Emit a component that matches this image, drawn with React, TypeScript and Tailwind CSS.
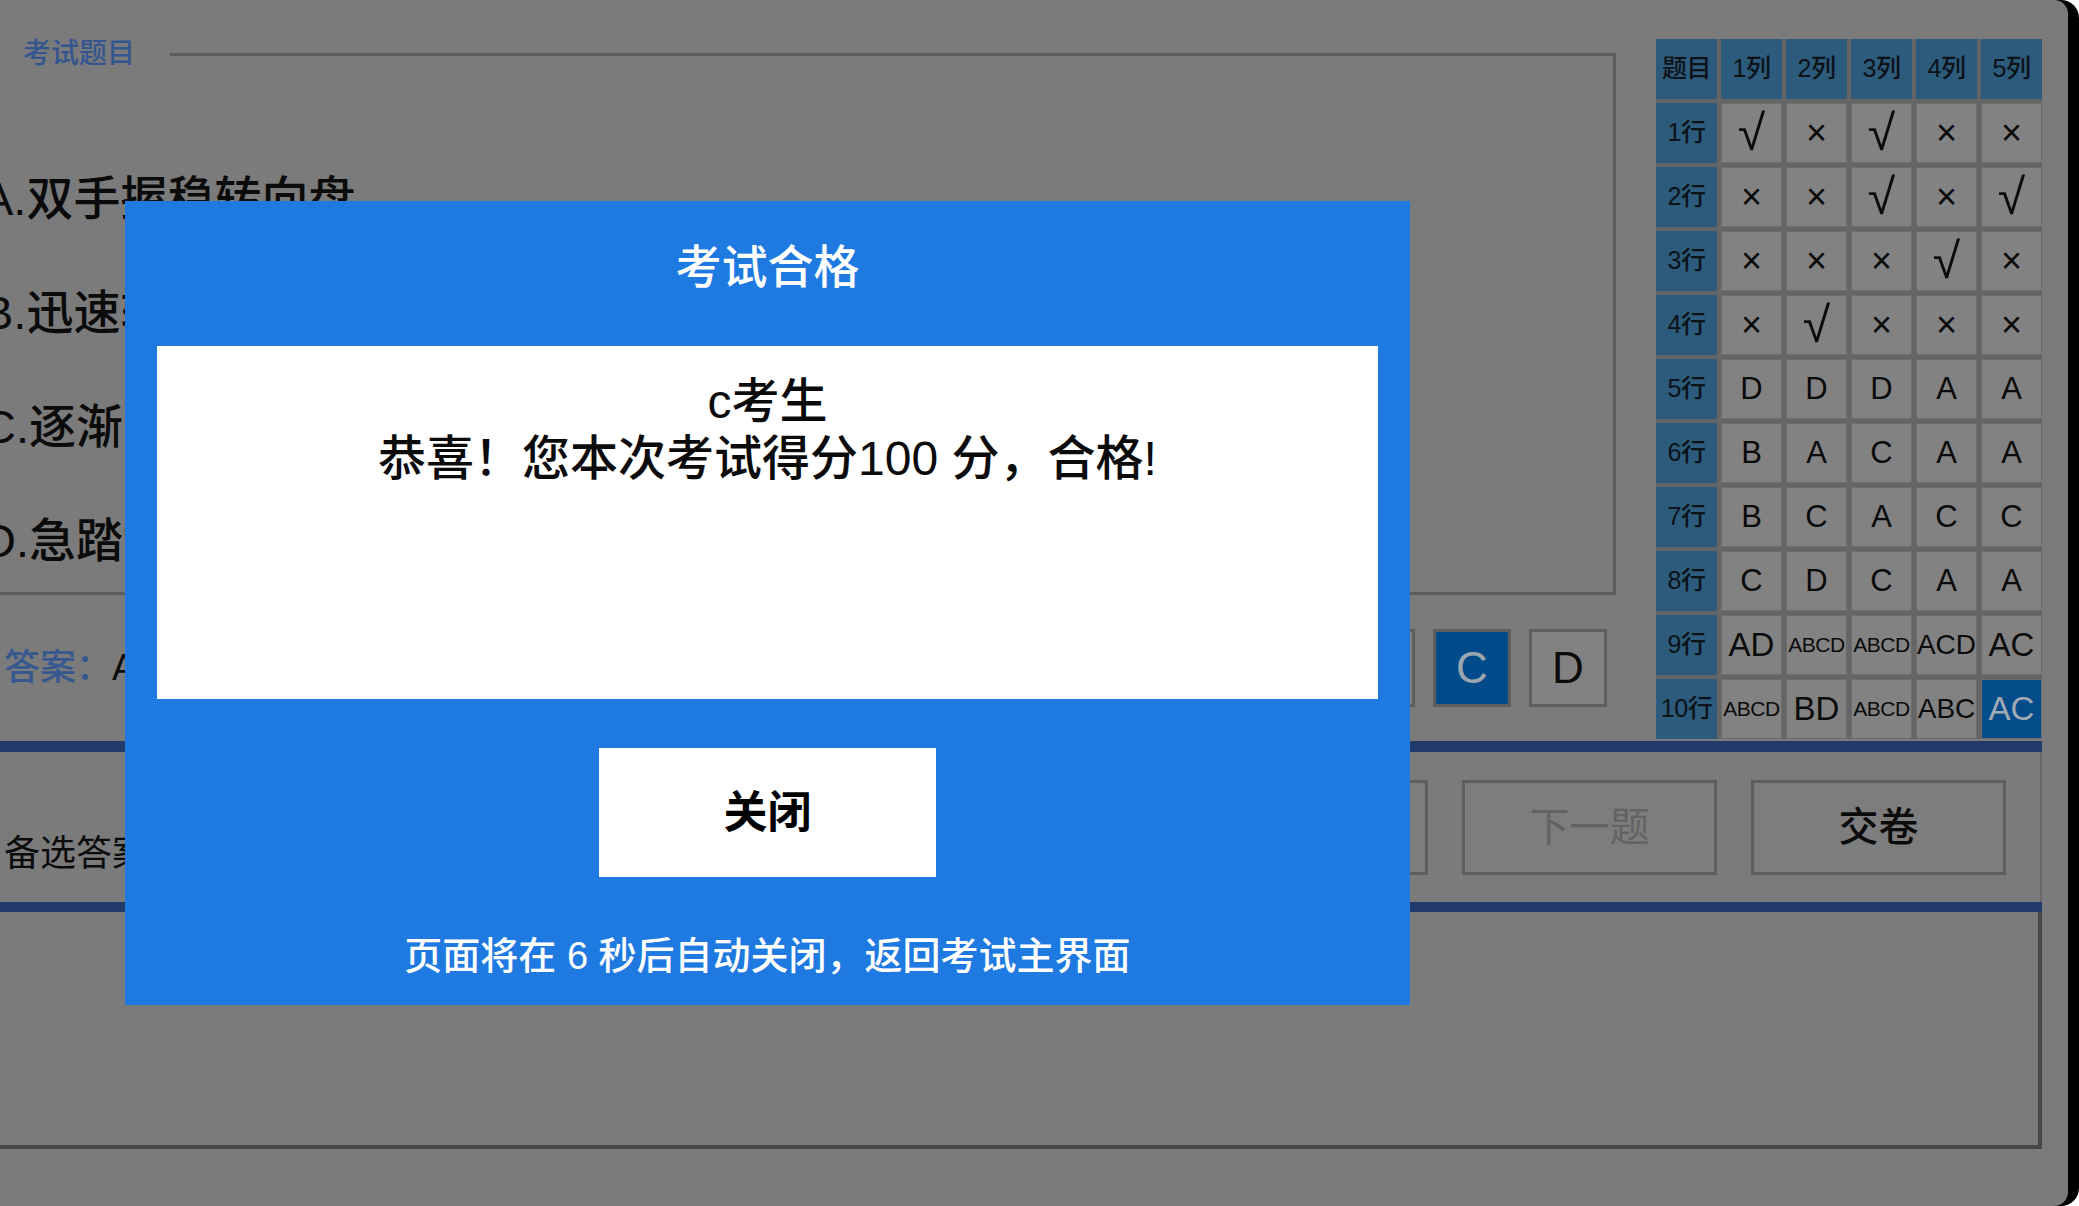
import React from 'react';

const FONT = "font-['Liberation_Sans','Noto_Sans_CJK_SC',sans-serif]";

const options = ['A.双手握稳转向盘', 'B.迅速转动转向盘', 'C.逐渐降低车速', 'D.急踏制动踏板'];

// answer sheet: 10 rows x 5 columns
const sheet: string[][] = [
  ['√', '×', '√', '×', '×'],
  ['×', '×', '√', '×', '√'],
  ['×', '×', '×', '√', '×'],
  ['×', '√', '×', '×', '×'],
  ['D', 'D', 'D', 'A', 'A'],
  ['B', 'A', 'C', 'A', 'A'],
  ['B', 'C', 'A', 'C', 'C'],
  ['C', 'D', 'C', 'A', 'A'],
  ['AD', 'ABCD', 'ABCD', 'ACD', 'AC'],
  ['ABCD', 'BD', 'ABCD', 'ABC', 'AC'],
];

function sizeFor(v: string) {
  if (v === '√') return 'text-[50px] leading-none';
  if (v === '×') return 'text-[36px] font-medium';
  if (v.length >= 4) return 'text-[21px] tracking-[-0.5px]';
  if (v.length === 3) return 'text-[28px]';
  if (v.length === 2) return 'text-[33px]';
  return 'text-[31px]';
}

function SheetCell({ v, current }: { v: string; current?: boolean }) {
  return (
    <div
      className={`flex items-center justify-center overflow-hidden whitespace-nowrap border border-[#6c6c6c] ${sizeFor(v)} ${
        current ? 'bg-[#054c8b] text-[#a2aab3]' : 'bg-[#828282] text-[#0b0b0b]'
      }`}
    >
      {v}
    </div>
  );
}

function HeadCell({ children }: { children: React.ReactNode }) {
  return (
    <div className="flex items-center justify-center bg-[#2c5b7c] text-[25px] font-medium text-[#0c1218] whitespace-nowrap tracking-[-0.5px]">
      {children}
    </div>
  );
}

function AnswerSheet() {
  return (
    <div className="grid grid-cols-[repeat(6,61px)] grid-rows-[repeat(11,60px)] gap-[4px] bg-[#656565]">
      <HeadCell>题目</HeadCell>
      {[1, 2, 3, 4, 5].map((c) => (
        <HeadCell key={c}>{c}列</HeadCell>
      ))}
      {sheet.map((row, r) => (
        <React.Fragment key={r}>
          <HeadCell>{r + 1}行</HeadCell>
          {row.map((v, c) => (
            <SheetCell key={c} v={v} current={r === 9 && c === 4} />
          ))}
        </React.Fragment>
      ))}
    </div>
  );
}

function ChoiceButton({ label, active }: { label: string; active?: boolean }) {
  return (
    <button
      className={`w-[78px] h-[78px] flex items-center justify-center border-[3px] border-[#5e5e5e] text-[44px] ${
        active ? 'bg-[#024b8b] text-[#9ca6b0]' : 'bg-[#828282] text-[#0b0b0b]'
      }`}
    >
      {label}
    </button>
  );
}

function NavButton({ label, disabled }: { label: string; disabled?: boolean }) {
  return (
    <button
      className={`w-[255px] h-[95px] flex items-center justify-center border-[3px] border-[#5e5e5e] bg-[#7d7d7d] text-[40px] ${
        disabled ? 'text-[#636363]' : 'text-[#0b0b0b] font-medium'
      }`}
    >
      {label}
    </button>
  );
}

function ResultDialog() {
  return (
    <div className="absolute left-[125px] top-[201px] w-[1285px] h-[804px] bg-[#1e79e1] flex flex-col items-center">
      <div className="h-[145px] pt-[41px] text-[46px] leading-[50px] font-medium text-white">考试合格</div>
      <div className="self-stretch mx-[32px] h-[353px] bg-white pt-[27px] text-center text-[48px] leading-[57px] font-medium text-[#0b0b0b]">
        <p>c考生</p>
        <p>恭喜！您本次考试得分100 分，合格!</p>
      </div>
      <button className="mt-[49px] w-[337px] h-[129px] bg-white flex items-center justify-center text-[44px] font-bold text-black">
        关闭
      </button>
      <p className="mt-[54px] text-[38px] leading-[50px] font-medium text-white">
        页面将在 6 秒后自动关闭，返回考试主界面
      </p>
    </div>
  );
}

export default function App() {
  return (
    <div className={`w-[2079px] h-[1206px] bg-white overflow-hidden ${FONT}`}>
      <div className="h-full bg-black rounded-r-[18px]">
        <div className="relative h-full mr-[11px] bg-[#7b7b7b] rounded-r-[14px] overflow-hidden">
          <div className="w-[2042px]">
            <div className="flex h-[741px]">
              <div className="-ml-[30px] w-[1646px] flex flex-col">
                <fieldset className="mt-[34px] border-[3px] border-[#5c5c5c]">
                  <legend className="pl-[50px] pr-[35px] text-[28px] leading-[40px] font-medium text-[#34558f]">
                    考试题目
                  </legend>
                  <div className="h-[518px] overflow-hidden pt-[68px] pl-[9px]">
                    {options.map((o) => (
                      <div key={o} className="h-[114px] flex items-center text-[47px] font-medium text-[#0b0b0b] whitespace-nowrap">
                        {o}
                      </div>
                    ))}
                  </div>
                </fieldset>
                <div className="flex-1 flex items-center pl-[34px] pr-[9px]">
                  <span className="text-[36px] font-medium text-[#37588f]">答案：</span>
                  <span className="text-[36px] font-medium text-[#0b0b0b]">AC</span>
                  <div className="ml-auto flex gap-[18px]">
                    <ChoiceButton label="A" active />
                    <ChoiceButton label="B" />
                    <ChoiceButton label="C" active />
                    <ChoiceButton label="D" />
                  </div>
                </div>
              </div>
              <div className="ml-[40px] mt-[39px]">
                <AnswerSheet />
              </div>
            </div>

            <div className="h-[11px] bg-[#213a6b]" />
            <div className="h-[150px] flex items-center pr-[34px] border-r-2 border-[#696969]">
              <span className="self-start mt-[82px] pl-[4px] text-[36px] leading-[40px] text-[#0b0b0b]">备选答案</span>
              <div className="ml-auto flex gap-[34px]">
                <NavButton label="上一题" />
                <NavButton label="下一题" disabled />
                <NavButton label="交卷" />
              </div>
            </div>
            <div className="h-[10px] bg-[#213a6b]" />
            <div className="h-[237px] border-r-4 border-b-4 border-[#474747]" />
          </div>

          <ResultDialog />
        </div>
      </div>
    </div>
  );
}
